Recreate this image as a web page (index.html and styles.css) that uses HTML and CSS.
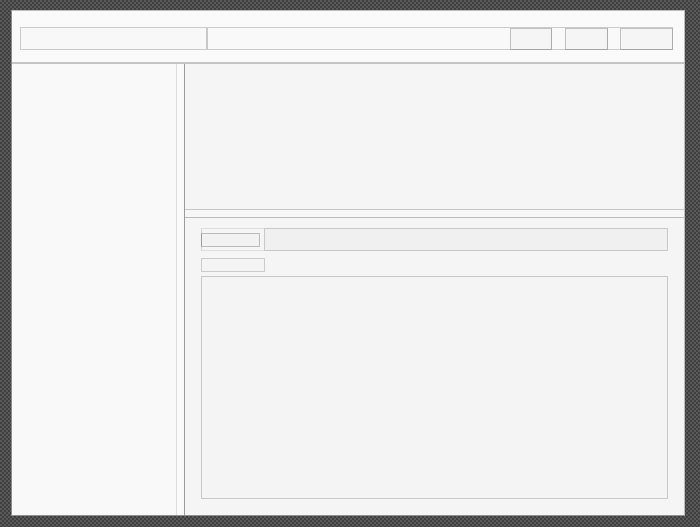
FILE: index.html
```html
<!DOCTYPE html>
<html lang="en">
<head>
    <meta charset="UTF-8">
    <meta name="viewport" content="width=device-width, initial-scale=1.0">
    <title>Wireframe</title>
    <link rel="stylesheet" href="styles.css">
</head>
<body>
    <div class="window">
        <!-- Верхняя панель -->
        <div class="toolbar">
            <div class="address-bar">
                <div class="field-left"></div>
                <div class="field-right">
                    <div class="tool-btn btn-a"></div>
                    <div class="tool-btn btn-b"></div>
                    <div class="tool-btn btn-c"></div>
                </div>
            </div>
        </div>

        <div class="workspace">
            <div class="sidebar"></div>
            <div class="v-splitter"></div>
            <div class="main">
                <div class="top-pane"></div>
                <div class="h-splitter"></div>
                <div class="bottom-pane">
                    <div class="tab-row">
                        <div class="tab">
                            <div class="tab-inner"></div>
                        </div>
                        <div class="tab-field"></div>
                    </div>
                    <div class="small-box"></div>
                    <div class="big-box"></div>
                </div>
            </div>
        </div>
    </div>
</body>
</html>
```

FILE: styles.css
```css
body {
    margin: 0;
    padding: 0;
    height: 527px;
    background-color: #4b4b4b;
    background-image: repeating-conic-gradient(#3e3e3e 0 25%, #5a5a5a 0 50%);
    background-size: 4px 4px;
    font-family: 'Liberation Sans', Arial, sans-serif;
    overflow: hidden;
}
.window {
    margin: 10px 0 0 11px;
    width: 674px;
    height: 506px;
    box-sizing: border-box;
    background-color: #fafafa;
    border: 1px solid #bdbdbd;
    border-left-color: #8c8c8c;
    border-bottom-color: #8f8f8f;
    display: flex;
    flex-direction: column;
}
.toolbar {
    height: 35px;
    padding: 16px 11px 0 8px;
    border-bottom: 2px solid #c4c4c4;
    background-color: #fafafa;
}
.address-bar {
    display: flex;
    align-items: flex-start;
    height: 23px;
    box-sizing: border-box;
    border: 1px solid #cbcbcb;
    border-right: none;
}
.field-left {
    width: 185px;
    height: 21px;
    border-right: 2px solid #c8c8c8;
    background-color: #f8f8f8;
}
.field-right {
    flex: 1;
    height: 21px;
    display: flex;
    justify-content: flex-end;
    background-color: #f9f9f9;
}
.tool-btn {
    height: 22px;
    box-sizing: border-box;
    background-color: #f5f5f5;
    border: 1px solid #c0c0c0;
    border-right-color: #ababab;
    border-bottom-color: #a3a3a3;
}
.btn-a {
    width: 42px;
}
.btn-b {
    width: 43px;
    margin-left: 13px;
}
.btn-c {
    width: 53px;
    margin-left: 12px;
}
.workspace {
    flex: 1;
    display: flex;
    min-height: 0;
}
.sidebar {
    width: 164px;
    background-color: #f9f9f9;
}
.v-splitter {
    width: 7px;
    background-color: #fafafa;
    border-left: 1px solid #dcdcdc;
    border-right: 1px solid #9c9c9c;
}
.main {
    flex: 1;
    display: flex;
    flex-direction: column;
}
.top-pane {
    height: 145px;
    background-color: #f5f5f5;
}
.h-splitter {
    height: 7px;
    background-color: #f7f7f7;
    border-top: 1px solid #c6c6c6;
    border-bottom: 1px solid #bcbcbc;
}
.bottom-pane {
    flex: 1;
    display: flex;
    flex-direction: column;
    padding: 10px 16px 16px 16px;
    background-color: #f5f5f5;
}
.tab-row {
    display: flex;
    height: 23px;
}
.tab {
    width: 63px;
    box-sizing: border-box;
    border-top: 1px solid #dedede;
    border-bottom: 1px solid #dedede;
    border-left: 1px solid #d4d4d4;
    padding-top: 4px;
}
.tab-inner {
    width: 59px;
    height: 14px;
    box-sizing: border-box;
    margin-left: -1px;
    background-color: #f2f2f2;
    border: 1px solid #bcbcbc;
    border-left-color: #9a9a9a;
}
.tab-field {
    flex: 1;
    box-sizing: border-box;
    background-color: #f0f0f0;
    border: 1px solid #c8c8c8;
}
.small-box {
    width: 64px;
    height: 14px;
    box-sizing: border-box;
    margin-top: 7px;
    background-color: #f4f4f4;
    border: 1px solid #cbcbcb;
}
.big-box {
    flex: 1;
    margin-top: 4px;
    box-sizing: border-box;
    background-color: #f4f4f4;
    border: 1px solid #c8c8c8;
}
```
